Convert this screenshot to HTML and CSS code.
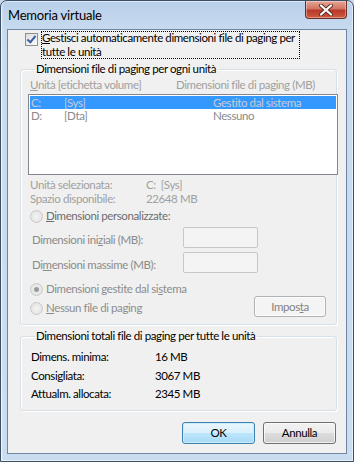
FILE: index.html
```html
<!DOCTYPE html>
<html lang="it">
<head>
  <meta charset="UTF-8" />
  <title>Memoria virtuale</title>
  <link rel="stylesheet" href="styles.css">
</head>
<body>

  <div class="window">
    <div class="titlebar">
      <span class="title">Memoria virtuale</span>
      <span class="close">
        <svg width="16" height="12" viewBox="0 0 16 12">
          <path d="M3 1.5 L13 10.5 M13 1.5 L3 10.5" stroke="#5a2a22" stroke-width="4" stroke-linecap="round"/>
          <path d="M3 1.5 L13 10.5 M13 1.5 L3 10.5" stroke="#fff" stroke-width="2.2" stroke-linecap="round"/>
        </svg>
      </span>
    </div>

    <div class="client">
      <div class="auto">
        <span class="check"></span>
        <span class="focus"><u>G</u>estisci automaticamente dimensioni file di paging per<br>tutte le unità</span>
      </div>

      <fieldset class="group first">
        <legend>Dimensioni file di paging per ogni unità</legend>
        <div class="cols dim">
          <span class="c-drive"><u>U</u>nità [etichetta volume]</span>
          <span>Dimensioni file di paging (MB)</span>
        </div>
        <div class="list">
          <div class="row sel"><span class="c-drv">C:</span><span class="c-lbl">[Sys]</span><span>Gestito dal sistema</span></div>
          <div class="row"><span class="c-drv">D:</span><span class="c-lbl">[Dta]</span><span>Nessuno</span></div>
        </div>

        <div class="info dim">
          <div class="pair"><span class="key">Unità selezionata:</span><span>C:&nbsp; [Sys]</span></div>
          <div class="pair"><span class="key">Spazio disponibile:</span><span>22648 MB</span></div>
        </div>

        <div class="opt custom"><span class="radio"></span><span><u>D</u>imensioni personalizzate:</span></div>
        <div class="field"><span class="flabel">Dimensioni ini<u>z</u>iali (MB):</span><span class="box"></span></div>
        <div class="field"><span class="flabel">Di<u>m</u>ensioni massime (MB):</span><span class="box"></span></div>

        <div class="opt system"><span class="radio on"></span><span>Dimensioni gestite dal si<u>s</u>tema</span></div>
        <div class="last">
          <div class="opt"><span class="radio"></span><span><u>N</u>essun file di paging</span></div>
          <span class="btn off">Impos<u>t</u>a</span>
        </div>
      </fieldset>

      <fieldset class="group second">
        <legend>Dimensioni totali file di paging per tutte le unità</legend>
        <div class="pair"><span class="key wide">Dimens. minima:</span><span>16 MB</span></div>
        <div class="pair"><span class="key wide">Consigliata:</span><span>3067 MB</span></div>
        <div class="pair"><span class="key wide">Attualm. allocata:</span><span>2345 MB</span></div>
      </fieldset>

      <div class="actions">
        <span class="btn default">OK</span>
        <span class="btn">Annulla</span>
      </div>
    </div>
  </div>

</body>
</html>
```

FILE: styles.css
```css
html, body {
  margin: 0;
  padding: 0;
  background: #c6d9ee;
}

body {
  font-family: Lato, 'Open Sans', sans-serif;
  font-size: 11.5px;
  letter-spacing: -0.4px;
  line-height: 14px;
  color: #000;
}

u {
  text-decoration: underline;
  text-underline-offset: 1px;
}

.window {
  width: 354px;
  height: 462px;
  box-sizing: border-box;
  border: 1px solid #3d4f66;
  border-radius: 7px 7px 0 0;
  padding: 0 6px 7px;
  display: flex;
  flex-direction: column;
  background:
    linear-gradient(to right, rgba(255,255,255,0.35), rgba(255,255,255,0) 3px),
    linear-gradient(to bottom, #b9d0ea 0, #c7daef 30px, #c9dcf0 100%);
  box-shadow: inset 0 0 0 1px rgba(255,255,255,0.55);
}

/* title bar */
.titlebar {
  height: 28px;
  display: flex;
  justify-content: space-between;
  align-items: flex-start;
}

.title {
  margin: 7px 0 0 1px;
  font-size: 13px;
  letter-spacing: -0.2px;
  color: #000;
}

.close {
  width: 42px;
  height: 18px;
  box-sizing: border-box;
  border: 1px solid #6b2f28;
  border-top: none;
  border-radius: 0 0 4px 4px;
  background: linear-gradient(to bottom, #e6a697 0, #d27463 45%, #b8392b 55%, #cf5b3f 100%);
  box-shadow: inset 0 0 0 1px rgba(255,255,255,0.35);
  display: flex;
  align-items: center;
  justify-content: center;
}

/* client area */
.client {
  flex: 1;
  border: 1px solid #6f86a2;
  background: #f0f0f0;
  padding: 0 9px 0 12px;
  display: flex;
  flex-direction: column;
}

.auto {
  display: flex;
  align-items: flex-start;
  margin-top: 1px;
}

.check {
  width: 13px;
  height: 13px;
  box-sizing: border-box;
  margin: 2px 3px 0 5px;
  border: 1px solid #8e8f8f;
  background: linear-gradient(135deg, #dcdcdc, #fbfbfb);
  position: relative;
}

.check::after {
  content: '';
  position: absolute;
  left: 3px;
  top: 0px;
  width: 3px;
  height: 7px;
  border: solid #3b5fa8;
  border-width: 0 2px 2px 0;
  transform: rotate(40deg);
}

.focus {
  display: block;
  padding: 0 5px 0 1px;
  outline: 1px dotted #000;
  outline-offset: -1px;
}

/* group boxes */
.group {
  margin: 3px 0 0;
  padding: 0 0 0 8px;
  min-width: 0;
  border: 1px solid #d5dfe5;
  border-radius: 3px;
  box-shadow: inset 1px 1px 0 #fff, 1px 1px 0 #fff;
}

.group legend {
  padding: 0 2px 0 1px;
  margin-left: 6px;
}

.dim {
  color: #a0a0a0;
}

.cols {
  display: flex;
  margin-top: 2px;
  padding-left: 1px;
}

.c-drive {
  width: 146px;
}

.list {
  margin: 2px -2px 0 -1px;
  height: 81px;
  box-sizing: border-box;
  border: 1px solid #828790;
  background: #fff;
  padding: 1px;
}

.row {
  display: flex;
  height: 13px;
  line-height: 13px;
  color: #8a8a8a;
  padding-left: 1px;
}

.row.sel {
  background: #3399ff;
  color: #c7ccd4;
}

.c-drv {
  width: 33px;
}

.c-lbl {
  width: 149px;
}

.info {
  margin-top: 3px;
}

.pair {
  display: flex;
  padding-left: 1px;
}

.key {
  width: 116px;
}

.key.wide {
  width: 124px;
}

.opt {
  display: flex;
  align-items: center;
  color: #8d8d8d;
}

.custom {
  margin-top: 3px;
  color: #6d6d6d;
}

.radio {
  width: 13px;
  height: 13px;
  box-sizing: border-box;
  border-radius: 50%;
  border: 1px solid #c9c9c9;
  background: radial-gradient(circle at 50% 50%, #f4f4f4, #dedede);
  margin: 0 3px 0 1px;
  position: relative;
}

.radio.on::after {
  content: '';
  position: absolute;
  left: 3px;
  top: 3px;
  width: 5px;
  height: 5px;
  border-radius: 50%;
  background: #9a9a9a;
}

.field {
  display: flex;
  align-items: center;
  justify-content: space-between;
  width: 226px;
  padding-left: 3px;
  margin-top: 4px;
  color: #8b8b8b;
}

.field + .field {
  margin-top: 4px;
}

.flabel {
  padding-top: 4px;
}

.box {
  width: 75px;
  height: 21px;
  box-sizing: border-box;
  border: 1px solid #c7c7c7;
  border-radius: 2px;
  background: #f4f4f4;
}

.system {
  margin-top: 9px;
}

.last {
  display: flex;
  justify-content: space-between;
  align-items: flex-start;
  padding-right: 10px;
  margin-bottom: 7px;
}

.last .opt {
  margin-top: 5px;
}

.btn {
  width: 73px;
  height: 22px;
  box-sizing: border-box;
  border: 1px solid #707070;
  border-radius: 3px;
  background: linear-gradient(to bottom, #f2f2f2 0, #ebebeb 50%, #dddddd 50%, #cfcfcf 100%);
  box-shadow: inset 0 0 0 1px rgba(255,255,255,0.7);
  display: flex;
  align-items: center;
  justify-content: center;
  color: #000;
}

.btn.off {
  width: 72px;
  height: 21px;
  border-color: #adb2b5;
  background: #f4f4f4;
  color: #838383;
}

.btn.default {
  border-color: #3c7fb1;
  background: linear-gradient(to bottom, #eaf6fd 0, #d9f0fc 50%, #bee6fd 50%, #a7d9f5 100%);
  box-shadow: inset 0 0 0 1px #cbeefb;
}

.second {
  margin-top: 4px;
  padding-top: 5px;
  padding-bottom: 6px;
}

.second .pair {
  height: 18.5px;
  align-items: center;
  padding-left: 2px;
}

.actions {
  display: flex;
  justify-content: flex-end;
  gap: 8px;
  margin-top: 11px;
  padding-right: 1px;
}
```
